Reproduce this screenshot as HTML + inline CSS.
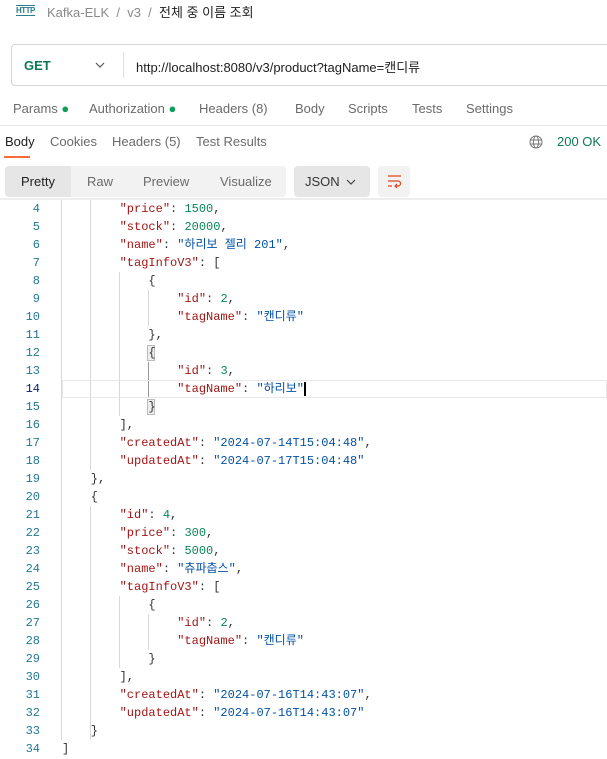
<!DOCTYPE html>
<html><head><meta charset="utf-8"><style>
*{margin:0;padding:0;box-sizing:border-box}
body{width:607px;height:759px;overflow:hidden;background:#fff;font-family:"Liberation Sans","Noto Sans CJK KR",sans-serif;font-size:13px;color:#212121;position:relative}
.a{position:absolute;white-space:nowrap}
.g{color:#6b6b6b}
.ln{position:absolute;width:40px;text-align:right;left:0;color:#237893;font-family:"Liberation Mono",monospace;font-size:12px;line-height:18px}
.cl{position:absolute;left:62px;line-height:18px;white-space:pre;font-family:"Liberation Mono","Noto Sans CJK KR",monospace;font-size:12px;color:#333}
.k{color:#a31515}.n{color:#098658}.s{color:#0451a5}
.guide{position:absolute;width:1px;background:#d9d9d9}
</style></head><body>
<div class="a" style="left:16px;top:5px;font-size:8px;font-weight:bold;color:#2a7d8c;letter-spacing:-0.5px;border-top:1px solid #2a7d8c;border-bottom:1px solid #2a7d8c;line-height:9px">HTTP</div>
<div class="a" style="left:47px;top:4px;line-height:17px;color:#8a8a8a">Kafka-ELK &nbsp;/&nbsp; v3 &nbsp;/&nbsp; <span style="color:#212121">전체 중 이름 조회</span></div>
<div class="a" style="left:11px;top:44px;width:620px;height:42px;border:1px solid #d6d6d6;border-radius:4px"></div>
<div class="a" style="left:24px;top:58px;font-weight:bold;color:#0b7a53;font-size:13px">GET</div>
<svg class="a" style="left:95px;top:61px" width="10" height="8"><path d="M1 2 L5 6 L9 2" fill="none" stroke="#555" stroke-width="1.2"/></svg>
<div class="a" style="left:123px;top:52px;width:1px;height:26px;background:#e0e0e0"></div>
<div class="a" style="left:136px;top:57px;color:#212121">http://localhost:8080/v3/product?tagName=캔디류</div>
<div class="a g" style="top:101px;left:13px">Params <span style="color:#0b9f5a">●</span></div>
<div class="a g" style="top:101px;left:89px">Authorization <span style="color:#0b9f5a">●</span></div>
<div class="a g" style="top:101px;left:199px">Headers (8)</div>
<div class="a g" style="top:101px;left:295px">Body</div>
<div class="a g" style="top:101px;left:348px">Scripts</div>
<div class="a g" style="top:101px;left:412px">Tests</div>
<div class="a g" style="top:101px;left:466px">Settings</div>
<div class="a" style="left:0;top:125px;width:607px;height:1px;background:#e6e6e6"></div>
<div class="a" style="top:134px;left:5px">Body</div>
<div class="a" style="left:4px;top:156px;width:26px;height:2px;background:#ff6c37"></div>
<div class="a g" style="top:134px;left:50px">Cookies</div>
<div class="a g" style="top:134px;left:112px">Headers (5)</div>
<div class="a g" style="top:134px;left:196px">Test Results</div>
<svg class="a" style="left:529px;top:135px" width="14" height="14" fill="none" stroke="#777" stroke-width="1"><circle cx="7" cy="7" r="6"/><ellipse cx="7" cy="7" rx="2.5" ry="6"/><path d="M1 5h12M1 9h12"/></svg>
<div class="a" style="top:134px;left:557px;color:#0b7a53">200 OK</div>
<div class="a" style="left:5px;top:166px;width:281px;height:31px;background:#f2f2f2;border-radius:4px"></div>
<div class="a" style="left:5px;top:166px;width:66px;height:31px;background:#e6e6e6;border-radius:4px 0 0 4px"></div>
<div class="a" style="left:21px;top:174px">Pretty</div>
<div class="a g" style="left:87px;top:174px">Raw</div>
<div class="a g" style="left:143px;top:174px">Preview</div>
<div class="a g" style="left:220px;top:174px">Visualize</div>
<div class="a" style="left:294px;top:166px;width:76px;height:31px;background:#e6e6e6;border-radius:4px"></div>
<div class="a" style="left:305px;top:174px;color:#333">JSON</div>
<svg class="a" style="left:346px;top:178px" width="10" height="8"><path d="M1 2 L5 6 L9 2" fill="none" stroke="#444" stroke-width="1.2"/></svg>
<div class="a" style="left:378px;top:166px;width:32px;height:31px;background:#f2f2f2;border-radius:4px"></div>
<svg class="a" style="left:387px;top:174px" width="15" height="15" fill="none" stroke="#e0451c" stroke-width="1.2"><path d="M1 2h13M1 7h10a2.5 2.5 0 0 1 0 5H8M10 10l-2 2 2 2M1 12h4"/></svg>
<div class="a" style="left:0;top:198px;width:607px;height:2px;background:#eee"></div>
<div class="guide" style="left:61px;top:200px;height:540px"></div>
<div class="guide" style="left:90px;top:200px;height:270px"></div>
<div class="guide" style="left:90px;top:506px;height:234px"></div>
<div class="guide" style="left:119px;top:272px;height:144px"></div>
<div class="guide" style="left:119px;top:596px;height:72px"></div>
<div class="guide" style="left:148px;top:290px;height:36px"></div>
<div class="guide" style="left:148px;top:362px;height:36px;background:#999"></div>
<div class="guide" style="left:148px;top:614px;height:36px"></div>
<div class="a" style="left:62px;top:380px;width:545px;height:18px;border:1px solid #e8e8e8"></div>
<div class="a" style="left:147px;top:345px;width:8px;height:16px;border:1px solid #bbb;background:#eee"></div>
<div class="a" style="left:147px;top:399px;width:8px;height:16px;border:1px solid #bbb;background:#eee"></div>
<div class="ln" style="top:200px">4<br>5<br>6<br>7<br>8<br>9<br>10<br>11<br>12<br>13<br><span style="color:#0b216f">14</span><br>15<br>16<br>17<br>18<br>19<br>20<br>21<br>22<br>23<br>24<br>25<br>26<br>27<br>28<br>29<br>30<br>31<br>32<br>33<br>34</div>
<div class="cl" style="top:200px">        <span class="k">"price"</span>: <span class="n">1500</span>,
        <span class="k">"stock"</span>: <span class="n">20000</span>,
        <span class="k">"name"</span>: <span class="s">"하리보 젤리 201"</span>,
        <span class="k">"tagInfoV3"</span>: [
            {
                <span class="k">"id"</span>: <span class="n">2</span>,
                <span class="k">"tagName"</span>: <span class="s">"캔디류"</span>
            },
            {
                <span class="k">"id"</span>: <span class="n">3</span>,
                <span class="k">"tagName"</span>: <span class="s">"하리보"</span><span style="border-left:2px solid #000"></span>
            }
        ],
        <span class="k">"createdAt"</span>: <span class="s">"2024-07-14T15:04:48"</span>,
        <span class="k">"updatedAt"</span>: <span class="s">"2024-07-17T15:04:48"</span>
    },
    {
        <span class="k">"id"</span>: <span class="n">4</span>,
        <span class="k">"price"</span>: <span class="n">300</span>,
        <span class="k">"stock"</span>: <span class="n">5000</span>,
        <span class="k">"name"</span>: <span class="s">"츄파춥스"</span>,
        <span class="k">"tagInfoV3"</span>: [
            {
                <span class="k">"id"</span>: <span class="n">2</span>,
                <span class="k">"tagName"</span>: <span class="s">"캔디류"</span>
            }
        ],
        <span class="k">"createdAt"</span>: <span class="s">"2024-07-16T14:43:07"</span>,
        <span class="k">"updatedAt"</span>: <span class="s">"2024-07-16T14:43:07"</span>
    }
]</div>
</body></html>
